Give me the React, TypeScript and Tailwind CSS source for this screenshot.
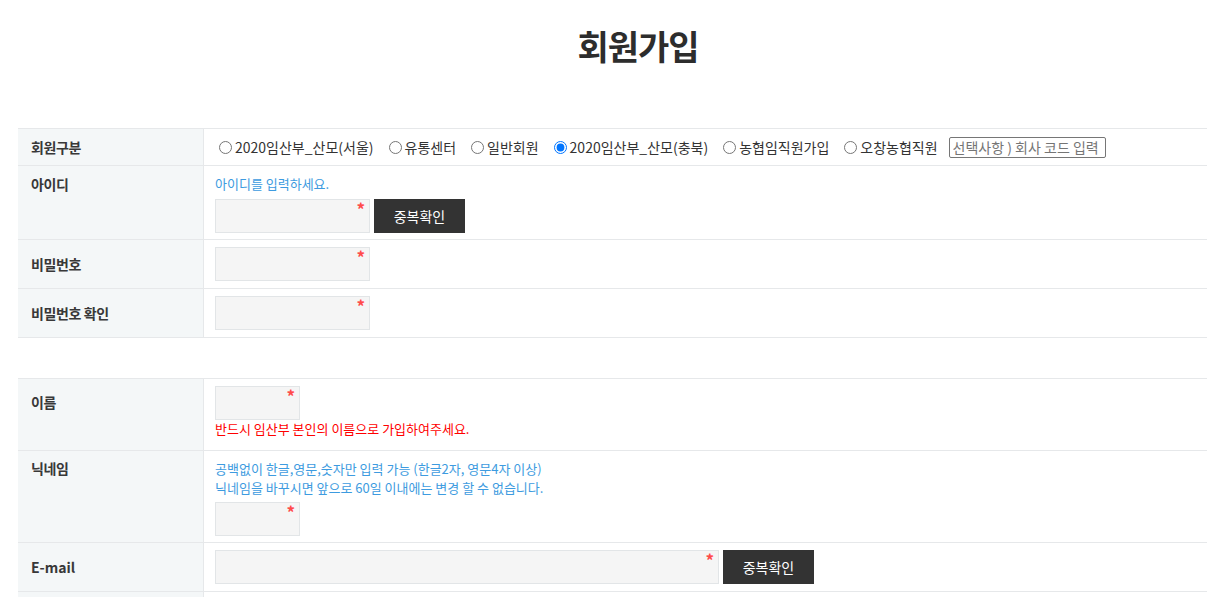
import type { ReactNode } from 'react';

const memberTypes = [
  { label: '2020임산부_산모(서울)', checked: false },
  { label: '유통센터', checked: false },
  { label: '일반회원', checked: false },
  { label: '2020임산부_산모(충북)', checked: true },
  { label: '농협임직원가입', checked: false },
  { label: '오창농협직원', checked: false },
];

function Row({ label, labelClass, children, className }: { label: string; labelClass?: string; children: ReactNode; className?: string }) {
  return (
    <div className="flex border-b border-[#e6e8ea]">
      <div
        className={`w-[186px] shrink-0 border-r border-[#e6e8ea] bg-[#f4f7f8] pl-[13px] text-[14px] font-bold leading-[20px] tracking-[-0.4px] text-[#383838] ${labelClass ?? ''}`}
      >
        {label}
      </div>
      <div className={`flex-1 pl-[11px] ${className ?? ''}`}>{children}</div>
    </div>
  );
}

function Field({ width }: { width: string }) {
  return (
    <div className={`relative h-[34px] ${width}`}>
      <input
        type="text"
        className="h-full w-full border border-[#e2e5e7] bg-[#f5f5f5] px-2 text-[13px] outline-none"
      />
      <span className="pointer-events-none absolute right-[5px] top-[3px] text-[17px] font-bold leading-[14px] text-[#ff4a4a]">*</span>
    </div>
  );
}

function CheckButton() {
  return (
    <button type="button" className="h-[34px] w-[91px] bg-[#333] text-[14px] font-normal text-white">
      중복확인
    </button>
  );
}

export default function App() {
  return (
    <div className="w-full overflow-hidden bg-white font-['Noto_Sans_CJK_KR','Noto_Sans',sans-serif] text-[#333]">
      <div className="ml-[18px] w-[1240px]">
        <h1 className="pt-[29px] text-center text-[34px] font-bold leading-[34px] tracking-[-1px] text-[#2d2d2d]">회원가입</h1>

        <div className="mt-[65px] border-t border-[#e6e8ea]">
          <Row label="회원구분" labelClass="flex items-center" className="flex h-[36px] items-center">
            <div className="flex items-center text-[14px] text-[#333]">
              {memberTypes.map(t => (
                <label key={t.label} className="mr-[11px] flex items-center">
                  <input
                    type="radio"
                    name="memberType"
                    defaultChecked={t.checked}
                    className="ml-[4px] mr-[3px] h-[13px] w-[13px]"
                  />
                  <span>{t.label}</span>
                </label>
              ))}
              <input
                type="text"
                placeholder="선택사항 ) 회사 코드 입력"
                className="h-[21px] w-[157px] rounded-[2px] border border-[#767676] px-[3px] text-[14px] text-[#333] outline-none placeholder:text-[#757575]"
              />
            </div>
          </Row>

          <Row label="아이디" labelClass="pt-[8px]" className="pb-[6px] pt-[9px]">
            <p className="text-[13px] leading-[18px] text-[#3d9be0]">아이디를 입력하세요.</p>
            <div className="mt-[6px] flex gap-[4px]">
              <Field width="w-[155px]" />
              <CheckButton />
            </div>
          </Row>

          <Row label="비밀번호" labelClass="flex items-center" className="py-[7px]">
            <Field width="w-[155px]" />
          </Row>

          <Row label="비밀번호 확인" labelClass="flex items-center" className="py-[7px]">
            <Field width="w-[155px]" />
          </Row>
        </div>

        <div className="mt-[40px] border-t border-[#e6e8ea]">
          <Row label="이름" labelClass="pt-[13px]" className="pb-[12px] pt-[7px]">
            <Field width="w-[85px]" />
            <p className="text-[13px] leading-[18px] text-[#ff0000]">반드시 임산부 본인의 이름으로 가입하여주세요.</p>
          </Row>

          <Row label="닉네임" labelClass="pt-[7px]" className="pb-[6px] pt-[8px]">
            <p className="text-[13px] leading-[19px] text-[#3d9be0]">공백없이 한글,영문,숫자만 입력 가능 (한글2자, 영문4자 이상)</p>
            <p className="text-[13px] leading-[19px] text-[#3d9be0]">닉네임을 바꾸시면 앞으로 60일 이내에는 변경 할 수 없습니다.</p>
            <div className="mt-[5px]">
              <Field width="w-[85px]" />
            </div>
          </Row>

          <Row label="E-mail" labelClass="flex items-center tracking-normal font-semibold" className="py-[7px]">
            <div className="flex gap-[4px]">
              <Field width="w-[504px]" />
              <CheckButton />
            </div>
          </Row>

          <Row label="" className="h-[48px]">
            <div />
          </Row>
        </div>
      </div>
    </div>
  );
}
